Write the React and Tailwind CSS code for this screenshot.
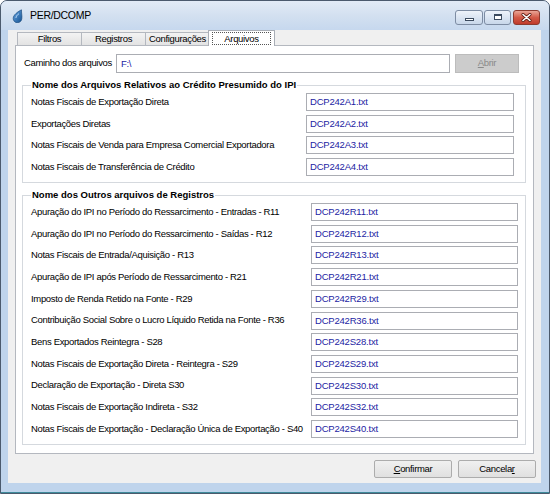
import React from 'react';

const font = "font-['Liberation_Sans',Arial,sans-serif]";

const creditoRows = [
    ['Notas Fiscais de Exportação Direta', 'DCP242A1.txt'],
    ['Exportações Diretas', 'DCP242A2.txt'],
    ['Notas Fiscais de Venda para Empresa Comercial Exportadora', 'DCP242A3.txt'],
    ['Notas Fiscais de Transferência de Crédito', 'DCP242A4.txt'],
];

const outrosRows = [
    ['Apuração do IPI no Período do Ressarcimento - Entradas - R11', 'DCP242R11.txt'],
    ['Apuração do IPI no Período do Ressarcimento - Saídas - R12', 'DCP242R12.txt'],
    ['Notas Fiscais de Entrada/Aquisição - R13', 'DCP242R13.txt'],
    ['Apuração de IPI após Período de Ressarcimento - R21', 'DCP242R21.txt'],
    ['Imposto de Renda Retido na Fonte - R29', 'DCP242R29.txt'],
    ['Contribuição Social Sobre o Lucro Líquido Retida na Fonte - R36', 'DCP242R36.txt'],
    ['Bens Exportados Reintegra - S28', 'DCP242S28.txt'],
    ['Notas Fiscais de Exportação Direta - Reintegra - S29', 'DCP242S29.txt'],
    ['Declaração de Exportação - Direta S30', 'DCP242S30.txt'],
    ['Notas Fiscais de Exportação Indireta - S32', 'DCP242S32.txt'],
    ['Notas Fiscais de Exportação - Declaração Única de Exportação - S40', 'DCP242S40.txt'],
];

const TextBox = ({ value, className = '' }) => (
    <div className={`h-[18px] bg-white border border-[#abadb3] pl-[3px] text-[#1d1da3] tracking-[-0.2px] leading-[16px] whitespace-nowrap overflow-hidden ${className}`}>
        {value}
    </div>
);

const GroupBox = ({ title, rows, cols, className = '' }) => (
    <fieldset className={`border border-[#d5d9de] ${className}`}>
        <legend className="ml-[8px] px-px font-bold tracking-normal leading-[12px] text-black">{title}</legend>
        <div className="flex flex-col gap-[3.7px] pl-[8px] pt-[2px] pb-[6px]">
            {rows.map(([label, file]) => (
                <div key={file} className={`grid ${cols} items-center`}>
                    <span className="whitespace-nowrap text-black">{label}</span>
                    <TextBox value={file} />
                </div>
            ))}
        </div>
    </fieldset>
);

const Tab = ({ label, selected }) =>
    selected ? (
        <div className="relative z-10 -mx-[2px] -mb-px h-[16px] w-[67px] bg-white border border-b-0 border-[#a9aeb6] flex items-start justify-center pt-px">
            <span className="border border-dotted border-[#555] px-[11px] leading-[11px] h-[13px]">{label}</span>
        </div>
    ) : (
        <div className="-ml-px h-[13px] w-[65px] bg-gradient-to-b from-[#f3f3f3] to-[#e3e3e3] border border-b-0 border-[#b4b8bf] flex items-center justify-center leading-[12px]">
            {label}
        </div>
    );

const CaptionButton = ({ children, className = '' }) => (
    <div className={`h-[15px] rounded-[3px] border flex items-center justify-center ${className}`}>{children}</div>
);

export default function App() {
    return (
        <div className={`w-[550px] h-[494px] bg-white ${font} text-[9.5px] tracking-[-0.33px] text-black`}>
            <div className="w-full h-full rounded-t-[7px] border border-[#4b5a6d] bg-[#bfd4ec] flex flex-col overflow-hidden">
                {/* Title bar */}
                <div className="h-[29px] shrink-0 flex items-center pl-[11px] pr-[9px] bg-gradient-to-b from-[#e2ebf6] via-[#d3e0f0] to-[#c6d8ee]">
                    <svg width="12" height="14" viewBox="0 0 12 14" className="mr-[6px]">
                        <defs>
                            <linearGradient id="drop" x1="0" y1="0" x2="1" y2="1">
                                <stop offset="0" stopColor="#6aa8e6" />
                                <stop offset="1" stopColor="#13508f" />
                            </linearGradient>
                        </defs>
                        <path d="M9.5 0.8 C6 2.5 1.2 6 1.2 9.3 A4.3 4.3 0 0 0 9.8 9.6 C10.3 6.8 9.2 3.6 9.5 0.8 Z" fill="url(#drop)" stroke="#0f3f73" strokeWidth="0.6" />
                        <path d="M4 8.5 C4.3 7 5.5 5.6 6.5 5" stroke="#cfe6ff" strokeWidth="0.9" fill="none" strokeLinecap="round" />
                    </svg>
                    <span className="text-[10.5px] tracking-[-0.3px] text-black">PER/DCOMP</span>
                    <div className="ml-auto flex items-center gap-px mt-[3px]">
                        <CaptionButton className="w-[28px] border-[#7d8ca3] bg-gradient-to-b from-[#eef3fa] to-[#c8d7ea]">
                            <div className="w-[9px] h-[3px] mt-[5px] bg-white border border-[#3b4a5e]" />
                        </CaptionButton>
                        <CaptionButton className="w-[27px] border-[#7d8ca3] bg-gradient-to-b from-[#eef3fa] to-[#c8d7ea]">
                            <div className="w-[8px] h-[6px] bg-white border border-[#3b4a5e] border-t-2" />
                        </CaptionButton>
                        <CaptionButton className="w-[27px] ml-px border-[#8c3a2f] bg-gradient-to-b from-[#e9a597] via-[#d25a48] to-[#c0392b]">
                            <svg width="11" height="9" viewBox="0 0 11 9">
                                <path d="M2 1.5 L9 7.5 M9 1.5 L2 7.5" stroke="#5a1a12" strokeWidth="3" strokeLinecap="round" />
                                <path d="M2 1.5 L9 7.5 M9 1.5 L2 7.5" stroke="#ffffff" strokeWidth="1.6" strokeLinecap="round" />
                            </svg>
                        </CaptionButton>
                    </div>
                </div>

                {/* Client area */}
                <div className="h-[453px] shrink-0 ml-[7px] mr-[8px] bg-[#f0f0f0] flex flex-col px-[7px]">
                    <div className="h-[15px] flex items-end pl-[3px]">
                        <Tab label="Filtros" />
                        <Tab label="Registros" />
                        <Tab label="Configurações" />
                        <Tab label="Arquivos" selected />
                    </div>

                    <div className="h-[409px] bg-white border border-[#b4b8bf] flex flex-col pt-[8px]">
                        <div className="flex items-center pl-[8px] h-[19px]">
                            <span className="w-[92px] whitespace-nowrap">Caminho dos arquivos</span>
                            <div className="w-[334px] h-[19px] bg-white border border-[#abadb3] pl-[4px] text-[#1d1da3] leading-[17px]">F:\</div>
                            <div className="ml-[5px] w-[64px] h-[19px] bg-[#cccccc] border border-[#bcbcbc] flex items-center justify-center text-[#8a8a8a]">
                                <span><u>A</u>brir</span>
                            </div>
                        </div>

                        <GroupBox
                            title="Nome dos Arquivos Relativos ao Crédito Presumido do IPI"
                            rows={creditoRows}
                            cols="grid-cols-[275px_208px]"
                            className="mt-[6px] ml-[6px] mr-[7px]"
                        />

                        <GroupBox
                            title="Nome dos Outros arquivos de Registros"
                            rows={outrosRows}
                            cols="grid-cols-[280px_207px]"
                            className="mt-[6px] ml-[6px] mr-[7px]"
                        />
                    </div>

                    <div className="flex justify-end gap-[6px] -mr-[2px] mt-[6px]">
                        <button className="w-[78px] h-[18px] bg-gradient-to-b from-[#f0f0f0] to-[#e0e0e0] border border-[#acacac] rounded-[2px] leading-[16px]">
                            <u>C</u>onfirmar
                        </button>
                        <button className="w-[78px] h-[18px] bg-gradient-to-b from-[#f0f0f0] to-[#e0e0e0] border border-[#acacac] rounded-[2px] leading-[16px]">
                            Cancela<u>r</u>
                        </button>
                    </div>
                </div>
                <div className="flex-1 border-b border-[#3e8a9a]" />
            </div>
        </div>
    );
}
